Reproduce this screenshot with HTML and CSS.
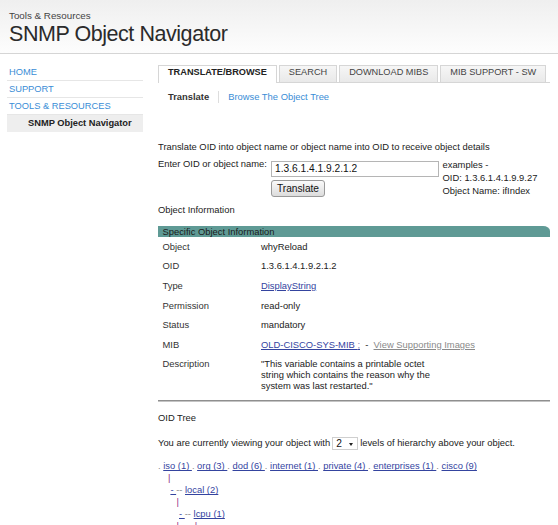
FILE: index.html
```html
<!DOCTYPE html>
<html lang="en">
<head>
<meta charset="utf-8">
<title>SNMP Object Navigator</title>
<link rel="stylesheet" href="styles.css">
</head>
<body>
<header class="masthead">
  <div class="kicker">Tools &amp; Resources</div>
  <h1 class="title">SNMP Object Navigator</h1>
</header>
<div class="layout">
  <nav class="sidenav">
    <a class="nav-item" href="#">HOME</a>
    <a class="nav-item" href="#">SUPPORT</a>
    <a class="nav-item" href="#">TOOLS &amp; RESOURCES</a>
    <span class="nav-item current">SNMP Object Navigator</span>
  </nav>
  <main class="content">
    <div class="tabs">
      <span class="tab active">TRANSLATE/BROWSE</span>
      <span class="tab">SEARCH</span>
      <span class="tab">DOWNLOAD MIBS</span>
      <span class="tab">MIB SUPPORT - SW</span>
    </div>
    <div class="subnav">
      <span class="subnav-item current">Translate</span>
      <a class="subnav-item link" href="#">Browse The Object Tree</a>
    </div>
    <p class="intro">Translate OID into object name or object name into OID to receive object details</p>
    <div class="form-row">
      <label class="form-label" for="oid">Enter OID or object name:</label>
      <div class="form-input">
        <input id="oid" class="oid-input" type="text" value="1.3.6.1.4.1.9.2.1.2">
        <button class="btn" type="button">Translate</button>
      </div>
      <div class="examples">examples -<br>OID: 1.3.6.1.4.1.9.9.27<br>Object Name: ifIndex</div>
    </div>
    <div class="section-title">Object Information</div>
    <div class="bar">Specific Object Information</div>
    <table class="info">
      <tr><td class="lbl">Object</td><td class="val">whyReload</td></tr>
      <tr><td class="lbl">OID</td><td class="val">1.3.6.1.4.1.9.2.1.2</td></tr>
      <tr><td class="lbl">Type</td><td class="val"><a class="dlink" href="#">DisplayString</a></td></tr>
      <tr><td class="lbl">Permission</td><td class="val">read-only</td></tr>
      <tr><td class="lbl">Status</td><td class="val">mandatory</td></tr>
      <tr><td class="lbl">MIB</td><td class="val"><a class="dlink" href="#">OLD-CISCO-SYS-MIB <span class="semi">;</span></a> &nbsp;- &nbsp;<a class="glink" href="#">View Supporting Images</a></td></tr>
      <tr class="desc-row"><td class="lbl">Description</td><td class="val"><div class="desc">"This variable contains a printable octet string which contains the reason why the system was last restarted."</div></td></tr>
    </table>
    <div class="rule"></div>
    <div class="section-title tree-title">OID Tree</div>
    <div class="levels-row">
      <span>You are currently viewing your object with</span>
      <span class="levels">2<span class="caret"></span></span>
      <span>levels of hierarchy above your object.</span>
    </div>
    <div class="tree">
      <div class="tline"><span class="dot">.</span> <a class="dlink" href="#">iso (1) </a><span class="dot">.</span> <a class="dlink" href="#">org (3) </a><span class="dot">.</span> <a class="dlink" href="#">dod (6) </a><span class="dot">.</span> <a class="dlink" href="#">internet (1) </a><span class="dot">.</span> <a class="dlink" href="#">private (4) </a><span class="dot">.</span> <a class="dlink" href="#">enterprises (1) </a><span class="dot">.</span> <a class="dlink" href="#">cisco (9)</a></div>
      <div class="tline ind1"><span class="pipe">|</span></div>
      <div class="tline ind2"><a class="dlink" href="#">- </a><span class="dash">--</span> <a class="dlink" href="#">local (2)</a></div>
      <div class="tline ind3"><span class="pipe">|</span></div>
      <div class="tline ind4"><a class="dlink" href="#">- </a><span class="dash">--</span> <a class="dlink" href="#">lcpu (1)</a></div>
      <div class="tline ind3"><span class="pipe">|</span><span class="pipe gap">|</span></div>
    </div>
  </main>
</div>
</body>
</html>
```
FILE: styles.css
```css
* { box-sizing: border-box; }

body {
  margin: 0;
  font-family: "Liberation Sans", Arial, sans-serif;
  font-size: 9.4px;
  color: #333;
  background: #fff;
}

a { text-decoration: none; }

.masthead {
  height: 54px;
  padding: 10px 0 0 9px;
  background: linear-gradient(#efefef, #fdfdfd);
  border-bottom: 1px solid #d5d5d5;
}

.kicker {
  font-size: 9.8px;
  line-height: 12px;
  color: #444;
}

.title {
  margin: 0;
  font-size: 21.5px;
  font-weight: normal;
  line-height: 24px;
  letter-spacing: -0.45px;
  color: #2b2b2b;
}

.layout {
  display: flex;
  align-items: flex-start;
  padding-left: 7px;
}

.sidenav {
  width: 136px;
  margin-top: 10px;
  display: flex;
  flex-direction: column;
  font-size: 9.3px;
}

.nav-item {
  display: block;
  line-height: 16px;
  padding-left: 2px;
  border-bottom: 1px solid #e6e6e6;
  color: #3a8dd6;
}

.nav-item.current {
  background: #eeeeee;
  color: #222;
  font-weight: bold;
  padding-left: 21px;
  border-bottom: none;
  line-height: 17px;
}

.content {
  margin-left: 15px;
  width: 392px;
  padding-top: 11px;
}

.tabs {
  display: flex;
  gap: 2px;
  height: 18px;
  border-bottom: 1px solid #d6d6d6;
  font-size: 9.2px;
}

.tab {
  height: 17px;
  padding: 0 9px 3px;
  line-height: 13px;
  border: 1px solid #d6d6d6;
  border-bottom: none;
  background: linear-gradient(#f6f6f6, #e9e9e9);
  color: #444;
}

.tab.active {
  height: 18px;
  background: #fff;
  color: #222;
  font-weight: bold;
}

.subnav {
  display: flex;
  margin-top: 8px;
  padding-left: 10px;
  line-height: 12px;
}

.subnav-item.current {
  font-weight: bold;
  color: #333;
  padding-right: 9px;
}

.subnav-item.link {
  color: #3a8dd6;
  padding-left: 9px;
  border-left: 1px solid #dddddd;
}

.intro {
  margin: 38px 0 0;
  line-height: 12px;
  color: #222;
}

.form-row {
  display: flex;
  align-items: flex-start;
  margin-top: 5px;
}

.form-label {
  width: 113px;
  line-height: 12px;
  color: #222;
}

.form-input {
  display: flex;
  flex-direction: column;
  align-items: flex-start;
  margin-top: 2.5px;
}

.oid-input {
  width: 168px;
  height: 16px;
  margin: 0;
  padding: 0 3px;
  border: 1px solid #b5b5b5;
  font-family: "Liberation Sans", Arial, sans-serif;
  font-size: 10.2px;
  color: #111;
}

.btn {
  width: 54px;
  height: 17px;
  margin-top: 3px;
  padding: 0;
  border: 1px solid #999;
  border-radius: 3px;
  background: linear-gradient(#fafafa, #dcdcdc);
  font-family: "Liberation Sans", Arial, sans-serif;
  font-size: 10.2px;
  color: #111;
}

.examples {
  margin-left: 3.5px;
  line-height: 13px;
  color: #222;
}

.section-title {
  margin-top: 6.5px;
  line-height: 12px;
  color: #222;
}

.bar {
  margin-top: 10.5px;
  height: 11px;
  line-height: 11px;
  padding-left: 4.5px;
  background: #5f9a95;
  color: #1b1b1b;
  border-top-right-radius: 7px 5px;
}

.info {
  border-collapse: collapse;
  width: 100%;
}

.info td {
  padding: 3.8px 0;
  line-height: 12px;
  vertical-align: top;
  color: #333;
}

.info .lbl {
  width: 103px;
  padding-left: 4.5px;
}

.info .val { color: #222; }

.info .desc-row td { line-height: 11px; }

.desc { max-width: 182px; }

.dlink {
  color: #34449f;
  text-decoration: underline;
}

.semi { color: #7f86b8; }

.glink {
  color: #8a8a8a;
  text-decoration: underline;
}

.rule {
  margin-top: 5.3px;
  height: 2px;
  border-top: 1px solid #8f8f8f;
  border-bottom: 1px solid #c4c4c4;
}

.tree-title { margin-top: 10px; }

.levels-row {
  display: flex;
  align-items: center;
  height: 14px;
  margin-top: 12px;
  line-height: 12px;
  color: #222;
}

.levels {
  position: relative;
  width: 26px;
  height: 13px;
  margin: 0 2px 0 2px;
  padding-left: 3px;
  border: 1px solid #cfcfcf;
  font-size: 10.2px;
  line-height: 11px;
  color: #111;
}

.caret {
  position: absolute;
  right: 4px;
  top: 5px;
  width: 0;
  height: 0;
  border-left: 2.5px solid transparent;
  border-right: 2.5px solid transparent;
  border-top: 3px solid #222;
}

.tree {
  margin-top: 10px;
}

.tline {
  line-height: 12px;
  white-space: nowrap;
}

.dot, .dash { color: #888; }

.pipe { color: #8e2a82; }

.pipe.gap { margin-left: 16px; }

.ind1 { padding-left: 10px; }
.ind2 { padding-left: 12.4px; }
.ind3 { padding-left: 18.4px; }
.ind4 { padding-left: 21px; }
```
